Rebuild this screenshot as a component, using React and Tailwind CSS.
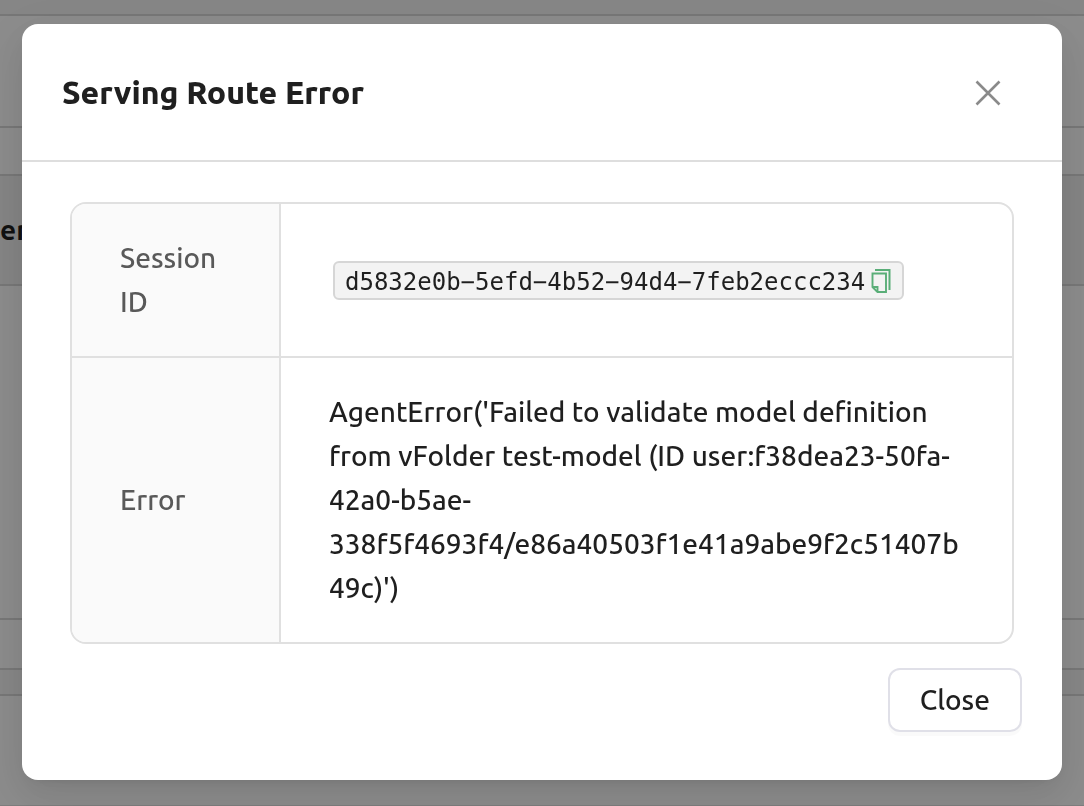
function CloseIcon() {
  return (
    <svg viewBox="0 0 28 28" className="size-7" fill="none" stroke="currentColor" strokeWidth="2.6" strokeLinecap="butt" aria-hidden="true">
      <path d="M2.5 3.5 25.5 26.5M25.5 3.5 2.5 26.5" />
    </svg>
  );
}

function CopyIcon() {
  return (
    <svg viewBox="0 0 20 25" className="h-[25px] w-5" fill="none" stroke="currentColor" strokeWidth="2" aria-hidden="true">
      <path d="M4 1H18.5V21" />
      <path d="M1.5 4.5H15V23H6.5L1.5 18Z" strokeWidth="1.9" />
      <path d="M1.5 18H6.5V23" strokeWidth="1.9" />
    </svg>
  );
}

function Backdrop() {
  return (
    <div className="flex h-screen flex-col overflow-hidden bg-white" aria-hidden="true">
      <div className="h-4 shrink-0 border-b-2 border-[#d9d9d9] bg-[#f5f5f5]" />
      <div className="h-28 shrink-0 border-b-2 border-[#d9d9d9]" />
      <div className="h-12 shrink-0 border-b-2 border-[#d9d9d9]" />
      <div className="flex h-[110px] shrink-0 items-center border-b-2 border-[#d9d9d9] bg-[#f2f2f2] text-[28px] font-bold">er</div>
      <div className="h-[334px] shrink-0 border-b-2 border-[#d9d9d9]" />
      <div className="h-[50px] shrink-0 border-b-2 border-[#d9d9d9]" />
      <div className="h-[26px] shrink-0 border-b-2 border-[#d9d9d9] bg-[#f5f5f5]" />
      <div className="flex-1 border-b border-[#e5e5e5]" />
    </div>
  );
}

export default function App() {
  return (
    <div className="font-['Ubuntu','Noto_Sans',sans-serif] text-[#1f1f1f]">
      <Backdrop />
      <div className="fixed inset-0 overflow-auto bg-black/45 px-[22px] py-6">
        <section
          role="dialog"
          aria-modal="true"
          aria-labelledby="dialog-title"
          className="rounded-2xl bg-white pb-12 shadow-[0_12px_32px_0_rgba(0,0,0,0.08),0_6px_12px_-8px_rgba(0,0,0,0.12),0_18px_56px_16px_rgba(0,0,0,0.05)]"
        >
          <header className="flex h-[138px] items-center justify-between border-b-2 border-[#dedede] pr-[60px] pl-10">
            <h1 id="dialog-title" className="text-[32px] leading-10 font-extrabold">Serving Route Error</h1>
            <button type="button" aria-label="Close dialog" className="text-[#8a8a8a]">
              <CloseIcon />
            </button>
          </header>

          <div className="px-12 pt-10">
            <div className="overflow-hidden rounded-2xl border-2 border-[#e0e0e0]">
              <table className="w-full table-fixed border-separate border-spacing-0 text-[28px] leading-[44px] font-medium">
                <colgroup>
                  <col className="w-[209px]" />
                  <col />
                </colgroup>
                <tbody>
                  <tr>
                    <th scope="row" className="border-r-2 border-b-2 border-[#e0e0e0] bg-[#fafafa] px-12 py-8 text-left font-medium text-[#595959]">
                      Session ID
                    </th>
                    <td className="border-b-2 border-[#e0e0e0] px-[52px] py-8">
                      <div className="flex">
                        <span className="flex items-center gap-1.5 rounded-md border-2 border-[#d6d6d6] bg-[#f3f3f3] pt-[3px] pr-[11px] pl-[10px]">
                          <code className="font-['DejaVu_Sans_Mono',monospace] text-[24px] leading-8 font-normal whitespace-nowrap">d5832e0b−5efd−4b52−94d4−7feb2eccc234</code>
                          <button type="button" aria-label="Copy session ID" className="text-[#5aae78]">
                            <CopyIcon />
                          </button>
                        </span>
                      </div>
                    </td>
                  </tr>
                  <tr>
                    <th scope="row" className="border-r-2 border-[#e0e0e0] bg-[#fafafa] px-12 py-8 text-left font-medium text-[#595959]">
                      Error
                    </th>
                    <td className="px-12 py-8 wrap-break-word">
                      AgentError('Failed to validate model definition from vFolder test-model (ID user:f38dea23-50fa-42a0-b5ae-338f5f4693f4/e86a40503f1e41a9abe9f2c51407b49c)')
                    </td>
                  </tr>
                </tbody>
              </table>
            </div>
          </div>

          <footer className="flex justify-end px-10 pt-6">
            <button type="button" className="h-16 rounded-xl border-2 border-[#e0e0e8] bg-white px-[30px] text-[28px] leading-10 font-medium shadow-[0_4px_0_0_rgba(0,0,0,0.02)]">
              Close
            </button>
          </footer>
        </section>
      </div>
    </div>
  );
}
